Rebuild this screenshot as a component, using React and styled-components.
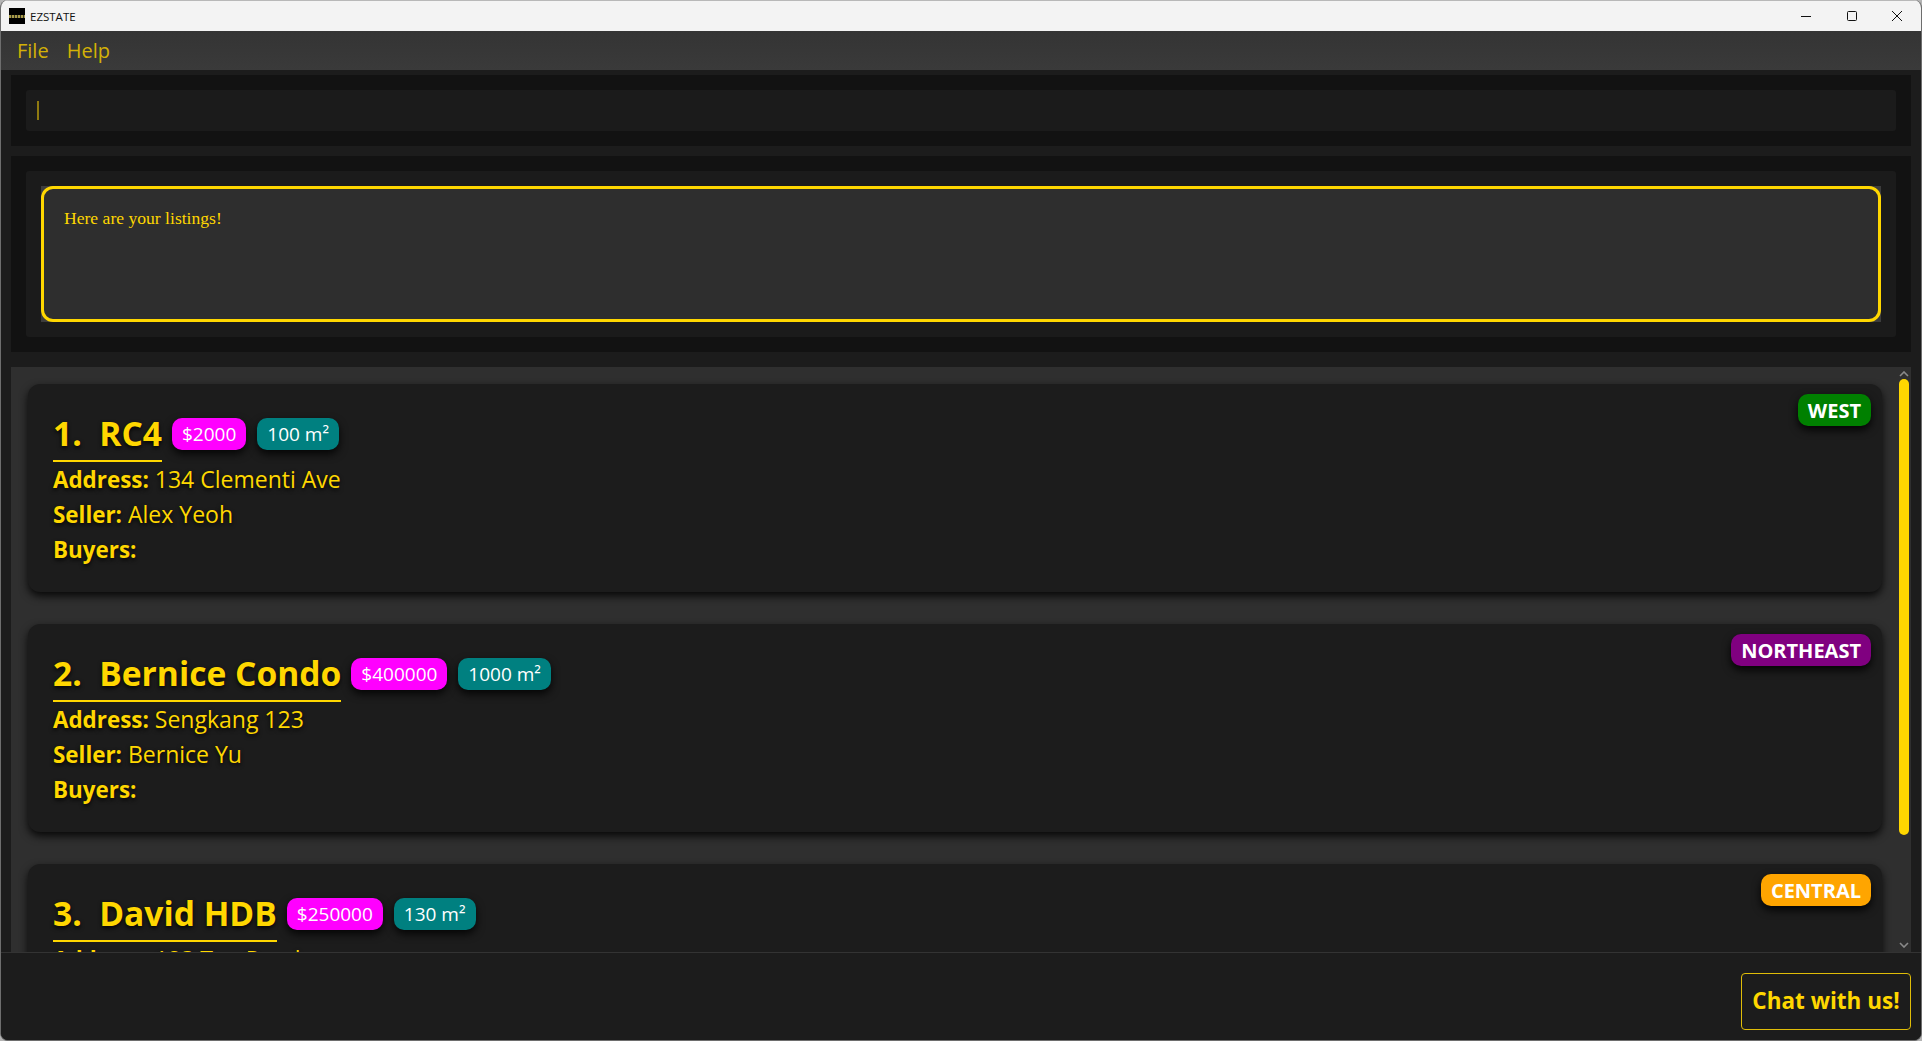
import React from "react"
import styled, { createGlobalStyle } from "styled-components"

const YELLOW = "#ffd700"
const UI_FONT = `"Open Sans", "Noto Sans", sans-serif`

const listings = [
  { id: 1, name: "RC4", price: "$2000", size: "100 m²", address: "134 Clementi Ave", seller: "Alex Yeoh", region: "WEST", regionColor: "#008000" },
  { id: 2, name: "Bernice Condo", price: "$400000", size: "1000 m²", address: "Sengkang 123", seller: "Bernice Yu", region: "NORTHEAST", regionColor: "#800080" },
  { id: 3, name: "David HDB", price: "$250000", size: "130 m²", address: "123 Tan Road", seller: "David Li", region: "CENTRAL", regionColor: "#ffa500" },
]

const GlobalStyle = createGlobalStyle`
  html, body {
    margin: 0;
    padding: 0;
    height: 100%;
    overflow: hidden;
    background: #b4b4b4;
  }
  * {
    box-sizing: border-box;
  }
`

const Window = styled.div`
  width: 1922px;
  height: 1041px;
  display: flex;
  flex-direction: column;
  background: #1c1c1c;
  border-left: 1px solid #6e6e6e;
  border-right: 1px solid #6e6e6e;
  border-bottom: 1px solid #6e6e6e;
  border-radius: 8px;
  overflow: hidden;
  font-family: ${UI_FONT};
`

const TitleBar = styled.div`
  height: 31px;
  flex: none;
  display: flex;
  align-items: center;
  padding-left: 8px;
  background: #f3f3f3;
  border-top: 1px solid #b8b8b8;
`

const AppIcon = styled.div`
  width: 16px;
  height: 16px;
  background: #000;
  display: flex;
  align-items: center;
  justify-content: center;
  &::after {
    content: "";
    width: 16px;
    height: 3px;
    background: repeating-linear-gradient(90deg, #a89b4a 0 2px, #3a3820 2px 3px);
  }
`

const AppName = styled.span`
  margin-left: 5px;
  font-size: 11.5px;
  color: #111;
`

const WindowControls = styled.div`
  margin-left: auto;
  display: flex;
  height: 100%;
  padding-right: 1px;
`

const ControlButton = styled.div`
  width: 45.5px;
  height: 100%;
  display: flex;
  align-items: center;
  justify-content: center;
  color: #111;
`

const MenuBar = styled.div`
  height: 39px;
  flex: none;
  display: flex;
  align-items: center;
  gap: 18px;
  padding-left: 16px;
  background: linear-gradient(#343434, #3a3a3a);
`

const MenuItem = styled.span`
  font-size: 20px;
  color: #d4b106;
`

const Panel = styled.div`
  flex: none;
  margin: ${(p) => p.$margin};
  padding: 15px;
  background: #121212;
`

const CommandBox = styled.div`
  height: 41px;
  display: flex;
  align-items: center;
  padding-left: 11px;
  background: #1b1b1b;
  border-radius: 3px;
`

const Caret = styled.div`
  width: 2px;
  height: 19px;
  background: #8f7a10;
`

const ResultOuter = styled.div`
  padding: 15px;
  background: #1b1b1b;
  border-radius: 3px;
`

const ResultFrame = styled.div`
  background: #3d3d3d;
`

const ResultBox = styled.div`
  height: 136px;
  padding: 19px 20px;
  background: #2e2e2e;
  border: 3px solid ${YELLOW};
  border-radius: 12px;
  font-family: "Liberation Serif", serif;
  font-size: 17.6px;
  color: ${YELLOW};
`

const ListPanel = styled.div`
  flex: 1;
  min-height: 0;
  margin: 0 10px;
  display: flex;
  background: #2f2f2f;
  overflow: hidden;
`

const ListScroll = styled.div`
  flex: 1;
  min-width: 0;
  padding: 17px 17px 0;
  display: flex;
  flex-direction: column;
  gap: 32px;
  overflow: hidden;
`

const Card = styled.article`
  position: relative;
  flex: none;
  height: 208px;
  padding: 28px 25px 0;
  background: #1c1c1c;
  border-radius: 12px;
  box-shadow: 0 4px 8px rgba(0, 0, 0, 0.85);
`

const TitleRow = styled.div`
  display: flex;
  align-items: flex-start;
  gap: 11px;
`

const Title = styled.h2`
  margin: 0 -1px 0 0;
  padding-bottom: 5px;
  border-bottom: 2px solid ${YELLOW};
  font-size: 33.6px;
  line-height: 43px;
  font-weight: 700;
  color: ${YELLOW};
  white-space: pre;
  text-shadow: 0 2px 4px rgba(0, 0, 0, 0.9);
`

const Tag = styled.span`
  margin-top: 6px;
  height: 32px;
  padding: 0 10px;
  display: flex;
  align-items: center;
  border-radius: 10px;
  background: ${(p) => p.$color};
  color: #fff;
  font-size: 19px;
  box-shadow: 0 4px 8px rgba(0, 0, 0, 0.85);
`

const InfoLine = styled.div`
  height: 35px;
  font-size: 23px;
  line-height: 35px;
  color: ${YELLOW};
  text-shadow: 0 2px 4px rgba(0, 0, 0, 0.9);
  b {
    font-size: 22.4px;
    font-weight: 700;
  }
`

const RegionBadge = styled.span`
  position: absolute;
  top: 10px;
  right: 11px;
  height: 32px;
  padding: 0 10px;
  display: flex;
  align-items: center;
  border-radius: 10px;
  background: ${(p) => p.$color};
  color: #fff;
  font-size: 20px;
  font-weight: 700;
  box-shadow: 0 4px 8px rgba(0, 0, 0, 0.9);
`

const ScrollTrack = styled.div`
  width: 12px;
  flex: none;
  position: relative;
  display: flex;
  flex-direction: column;
  align-items: center;
  justify-content: space-between;
  padding: 4px 2px 4px 0;
  color: #8a8a8a;
`

const ScrollThumb = styled.div`
  position: absolute;
  top: 12px;
  left: 0;
  width: 10px;
  height: 456px;
  border-radius: 5px;
  background: ${YELLOW};
`

const StatusBar = styled.div`
  height: 88px;
  flex: none;
  display: flex;
  justify-content: flex-end;
  align-items: flex-start;
  padding: 20px 10px 0 0;
  background: #1c1c1c;
  border-top: 1px solid #333;
`

const ChatButton = styled.button`
  width: 170px;
  height: 57px;
  padding: 0 0 3px;
  background: #1c1c1c;
  border: 1px solid #e0bd08;
  border-radius: 4px;
  color: ${YELLOW};
  font-family: ${UI_FONT};
  font-size: 22.5px;
  font-weight: 700;
`

const Chevron = ({ up }) => (
  <svg width="10" height="6" viewBox="0 0 10 6" fill="none" stroke="currentColor" strokeWidth="1.6">
    <path d={up ? "M1 5l4-4 4 4" : "M1 1l4 4 4-4"} />
  </svg>
)

const ListingCard = ({ item }) => (
  <Card>
    <TitleRow>
      <Title>{`${item.id}.  ${item.name}`}</Title>
      <Tag $color="#ff00ff">{item.price}</Tag>
      <Tag $color="#008080">{item.size}</Tag>
    </TitleRow>
    <InfoLine><b>Address:</b> {item.address}</InfoLine>
    <InfoLine><b>Seller:</b> {item.seller}</InfoLine>
    <InfoLine><b>Buyers:</b></InfoLine>
    <RegionBadge $color={item.regionColor}>{item.region}</RegionBadge>
  </Card>
)

export default function App() {
  return (
    <Window>
      <GlobalStyle />
      <TitleBar>
        <AppIcon />
        <AppName>EZSTATE</AppName>
        <WindowControls>
          <ControlButton>
            <svg width="10" height="10" viewBox="0 0 10 10" stroke="currentColor"><path d="M0 5.5h10" /></svg>
          </ControlButton>
          <ControlButton>
            <svg width="10" height="10" viewBox="0 0 10 10" fill="none" stroke="currentColor"><rect x=".5" y=".5" width="9" height="9" rx="1" /></svg>
          </ControlButton>
          <ControlButton>
            <svg width="10" height="10" viewBox="0 0 10 10" stroke="currentColor"><path d="M0 0l10 10M10 0L0 10" /></svg>
          </ControlButton>
        </WindowControls>
      </TitleBar>
      <MenuBar>
        <MenuItem>File</MenuItem>
        <MenuItem>Help</MenuItem>
      </MenuBar>
      <Panel $margin="5px 10px 10px">
        <CommandBox><Caret /></CommandBox>
      </Panel>
      <Panel $margin="0 10px 15px">
        <ResultOuter>
          <ResultFrame>
            <ResultBox>Here are your listings!</ResultBox>
          </ResultFrame>
        </ResultOuter>
      </Panel>
      <ListPanel>
        <ListScroll>
          {listings.map((item) => <ListingCard key={item.id} item={item} />)}
        </ListScroll>
        <ScrollTrack>
          <Chevron up />
          <ScrollThumb />
          <Chevron />
        </ScrollTrack>
      </ListPanel>
      <StatusBar>
        <ChatButton>Chat with us!</ChatButton>
      </StatusBar>
    </Window>
  )
}
